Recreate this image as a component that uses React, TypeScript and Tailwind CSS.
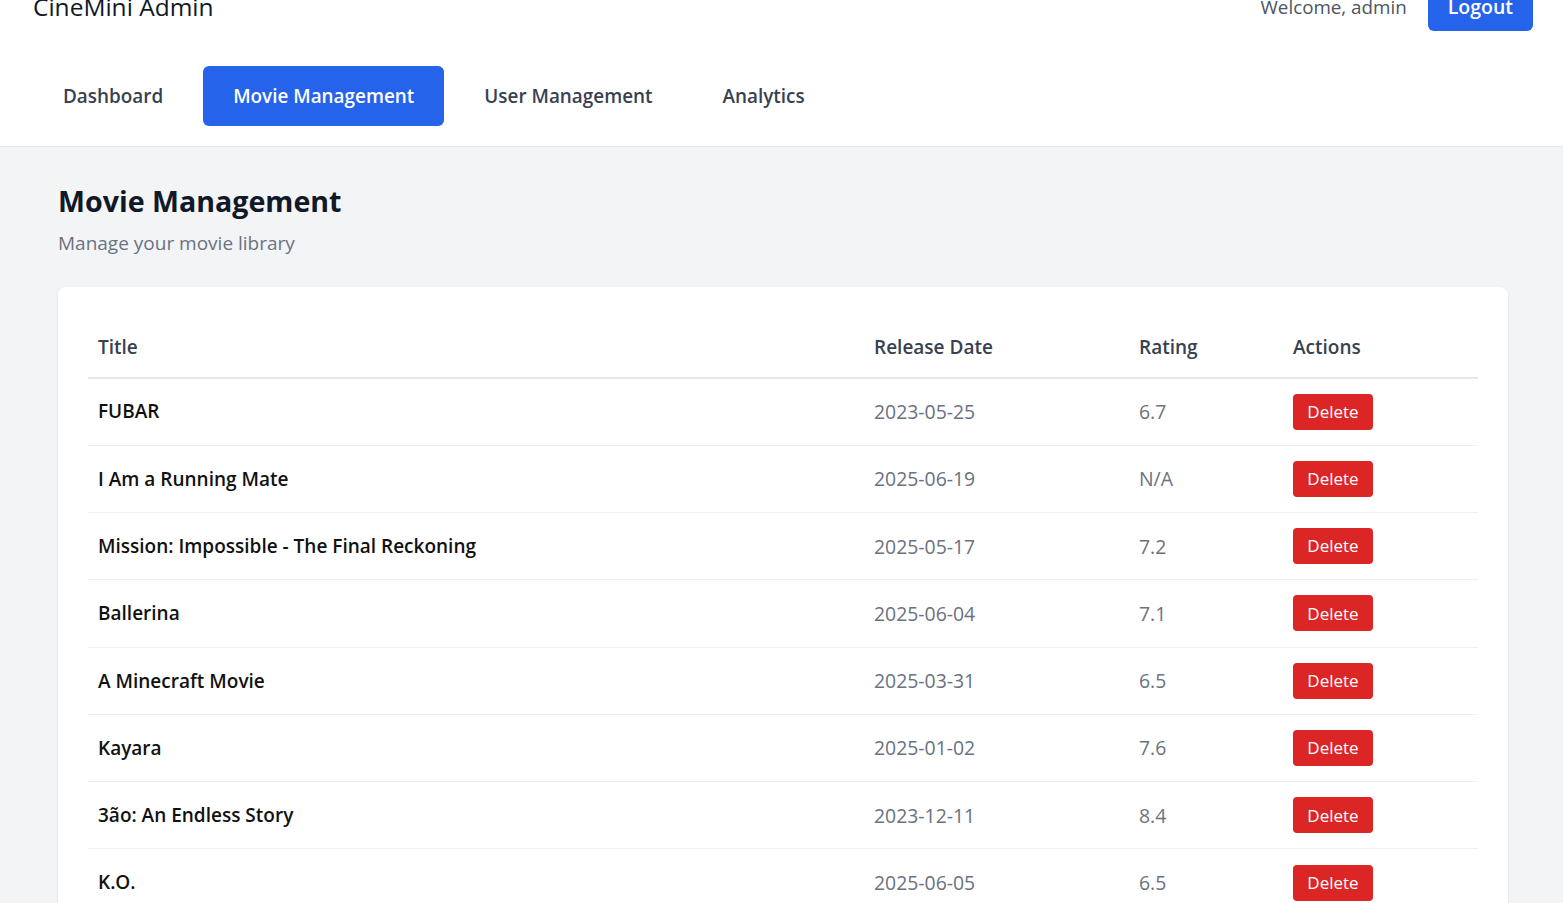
const movies = [
  { title: "FUBAR", date: "2023-05-25", rating: "6.7" },
  { title: "I Am a Running Mate", date: "2025-06-19", rating: "N/A" },
  { title: "Mission: Impossible - The Final Reckoning", date: "2025-05-17", rating: "7.2" },
  { title: "Ballerina", date: "2025-06-04", rating: "7.1" },
  { title: "A Minecraft Movie", date: "2025-03-31", rating: "6.5" },
  { title: "Kayara", date: "2025-01-02", rating: "7.6" },
  { title: "3ão: An Endless Story", date: "2023-12-11", rating: "8.4" },
  { title: "K.O.", date: "2025-06-05", rating: "6.5" },
  { title: "Sinners", date: "2025-04-16", rating: "7.5" },
]

const tabs = ["Dashboard", "Movie Management", "User Management", "Analytics"]

const App = () => {
  return (
    <div className="-mt-[37px] min-h-screen bg-[#f3f4f6] font-['Open_Sans',sans-serif] text-[20px]">
      {/* HEADER */}
      <header className="border-b border-[#e5e7eb] bg-white px-[33px] pb-5 pt-5 pr-[30px]">
        <div className="flex h-[48px] items-center justify-between">
          <h1 className="text-[24.5px] font-medium text-[#111827]">CineMini Admin</h1>
          <div className="flex items-center gap-[21px]">
            <span className="text-[18.8px] text-[#4b5563]">Welcome, admin</span>
            <button className="h-[48px] rounded-md bg-[#2563eb] px-5 text-[19.5px] font-semibold text-white">
              Logout
            </button>
          </div>
        </div>

        {/* NAV */}
        <nav className="mt-[35px] flex gap-[10px]">
          {tabs.map((tab) => (
            <button
              key={tab}
              className={
                tab === "Movie Management"
                  ? "h-[60px] rounded-md bg-[#2563eb] px-[30px] text-[18.9px] font-semibold text-white"
                  : "h-[60px] rounded-md px-[30px] text-[18.9px] font-semibold text-[#374151]"
              }
            >
              {tab}
            </button>
          ))}
        </nav>
      </header>

      {/* CONTENT */}
      <main className="px-[58px] pr-[55px] pt-[36px]">
        <h2 className="text-[28.6px] font-bold leading-[36px] text-[#111827]">Movie Management</h2>
        <p className="mt-[10px] text-[19px] leading-[28px] text-[#6b7280]">Manage your movie library</p>

        <div className="mt-[30px] rounded-lg bg-white p-[30px] shadow-sm">
          <table className="w-full table-fixed border-collapse text-left">
            <thead>
              <tr className="border-b-2 border-[#e5e7eb]">
                <th className="w-[776px] px-[10px] pb-[15px] pt-4 text-[19px] font-semibold text-[#374151]">Title</th>
                <th className="w-[265px] px-[10px] pb-[15px] pt-4 text-[19px] font-semibold text-[#374151]">Release Date</th>
                <th className="w-[154px] px-[10px] pb-[15px] pt-4 text-[19px] font-semibold text-[#374151]">Rating</th>
                <th className="px-[10px] pb-[15px] pt-4 text-[19px] font-semibold text-[#374151]">Actions</th>
              </tr>
            </thead>
            <tbody>
              {movies.map((movie) => (
                <tr key={movie.title} className="border-b border-[#f0f0f0]">
                  <td className="px-[10px] py-[15.15px] text-[19px] font-semibold text-[#111]">{movie.title}</td>
                  <td className="px-[10px] py-[15.15px] text-[19.4px] text-[#6b7280]">{movie.date}</td>
                  <td className="px-[10px] py-[15.15px] text-[19.4px] text-[#6b7280]">{movie.rating}</td>
                  <td className="px-[10px] py-[15.15px]">
                    <button className="h-[36px] w-[80px] rounded bg-[#dc2626] text-[17px] text-white">
                      Delete
                    </button>
                  </td>
                </tr>
              ))}
            </tbody>
          </table>
        </div>
      </main>
    </div>
  )
}

export default App
